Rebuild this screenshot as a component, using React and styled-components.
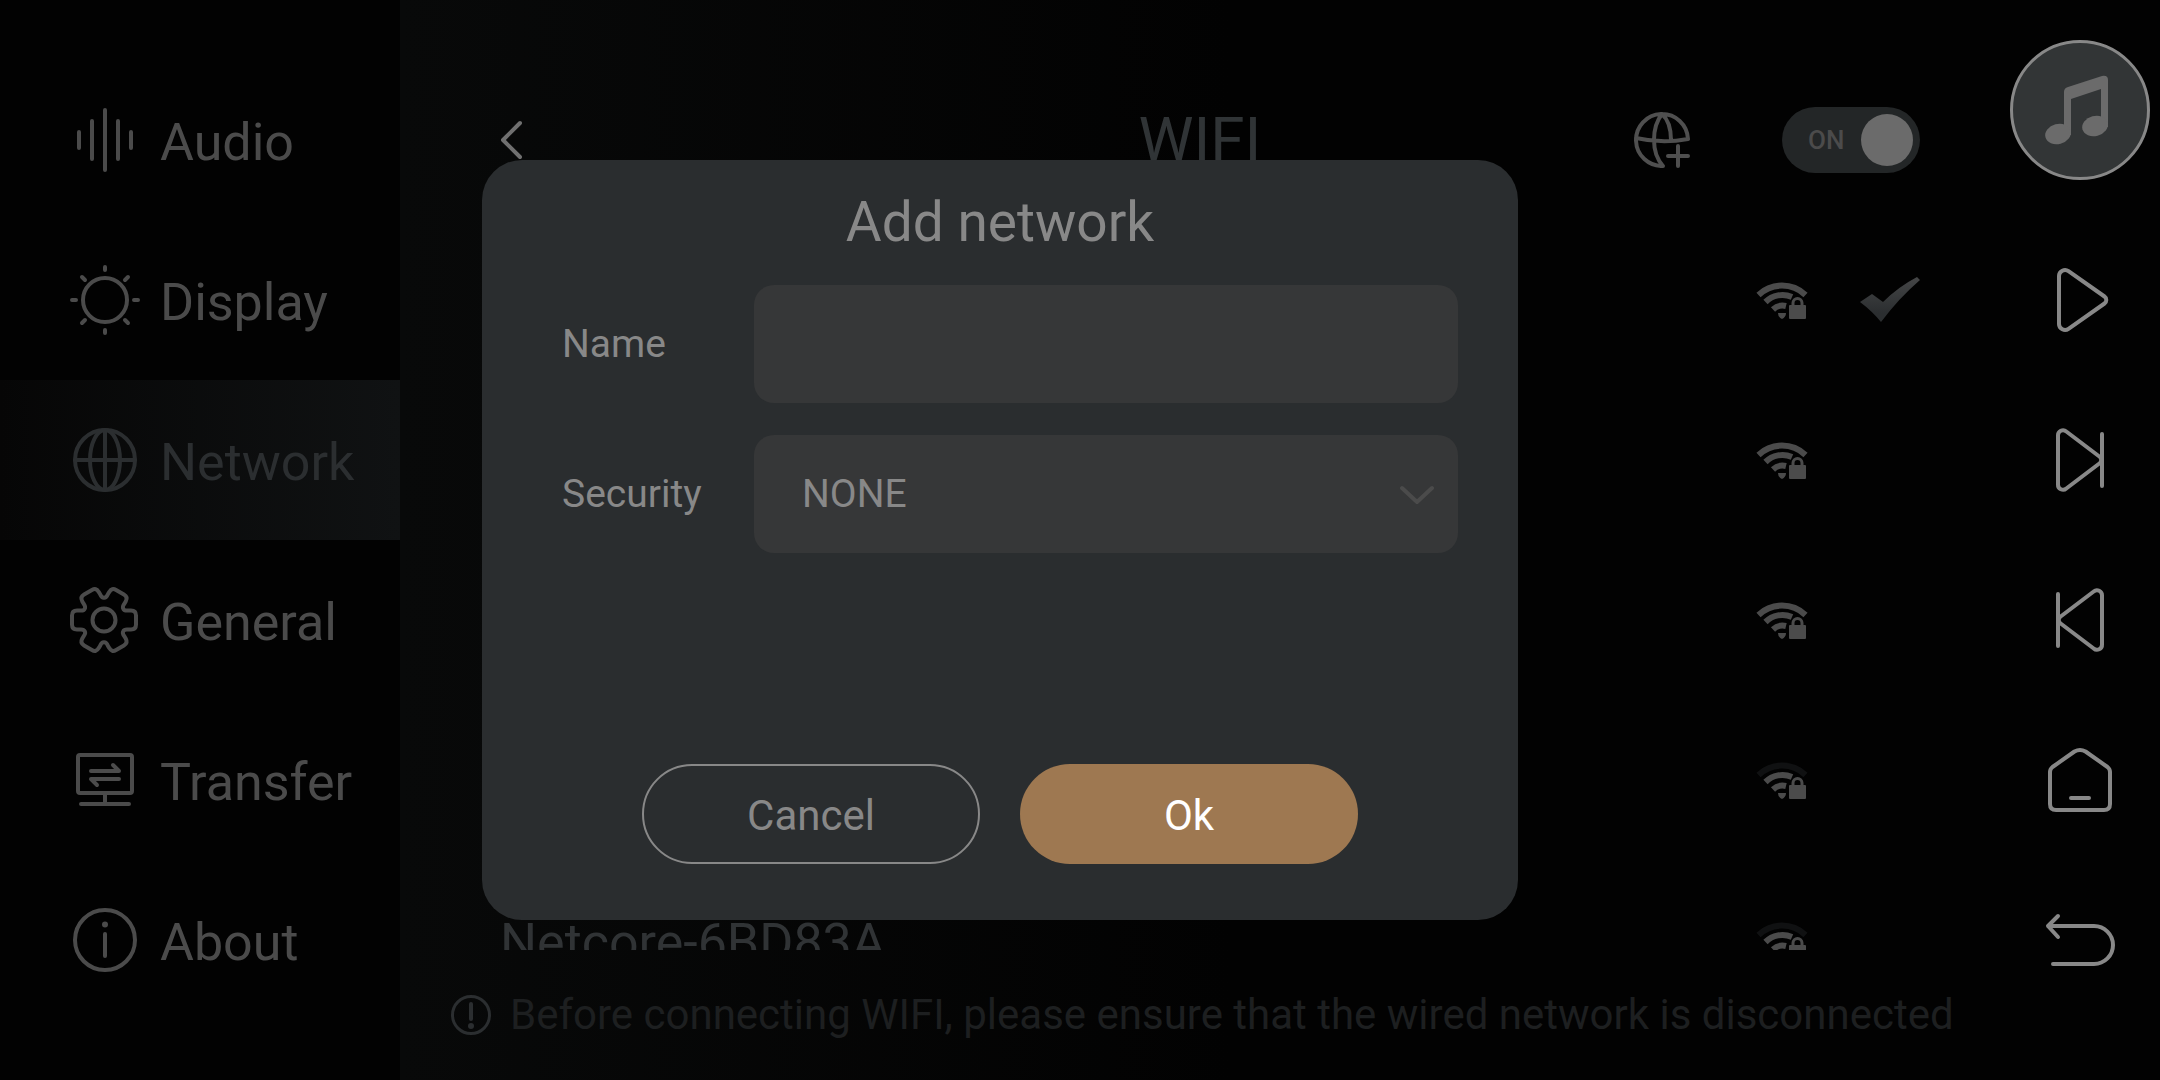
import React, { useState } from "react";
import styled, { createGlobalStyle, css } from "styled-components";

const GlobalStyle = createGlobalStyle`
  *,
  *::before,
  *::after {
    box-sizing: border-box;
  }

  body {
    margin: 0;
    background: #020202;
    font-family: Roboto, "Liberation Sans", sans-serif;
  }

  button,
  input,
  select {
    font-family: inherit;
  }
`;

const Shell = styled.div`
  display: flex;
  height: 100vh;
  overflow: hidden;
`;

const Screen = styled.div`
  position: relative;
  flex: 1;
  display: flex;
  min-width: 0;
`;

const Sidebar = styled.nav`
  flex: 0 0 400px;
  padding-top: 60px;
`;

const MenuItem = styled.button`
  display: flex;
  align-items: center;
  gap: 20px;
  width: 100%;
  height: 160px;
  padding: 0 0 0 70px;
  border: 0;
  background: ${({ $active }) =>
    $active ? "linear-gradient(90deg, #060606, #101213)" : "none"};
  color: ${({ $active }) => ($active ? "#2b2e30" : "#4b4b4b")};
  font-size: 52px;
  line-height: 60px;
  text-align: left;
`;

const MenuLabel = styled.span`
  padding-top: 5px;
`;

const Svg = styled.svg.attrs({ "aria-hidden": true })`
  display: block;
  flex: none;
  fill: none;
  stroke: currentColor;
  stroke-width: ${({ $stroke }) => $stroke || 4};
  stroke-linecap: round;
  stroke-linejoin: round;
`;

const Main = styled.main`
  flex: 1;
  display: flex;
  flex-direction: column;
  min-width: 0;
  padding-top: 60px;
  background: linear-gradient(90deg, #080909, #020202 52%);
`;

const Header = styled.header`
  display: grid;
  grid-template-columns: 1fr auto 1fr;
  align-items: center;
  height: 160px;
  flex: none;
  padding: 0 80px 0 100px;
`;

const PageTitle = styled.h1`
  margin: 0;
  padding-right: 20px;
  color: #303436;
  font-size: 62px;
  font-weight: 400;
  line-height: 70px;
`;

const HeaderActions = styled.div`
  display: flex;
  align-items: center;
  justify-content: flex-end;
  gap: 92px;
`;

const IconButton = styled.button`
  justify-self: start;
  padding: 0;
  border: 0;
  background: none;
  color: ${({ $bright }) => ($bright ? "#707070" : "#4f4f4f")};
`;

const Switch = styled.label`
  display: flex;
  align-items: center;
  justify-content: space-between;
  width: 138px;
  height: 66px;
  padding: 0 7px 0 26px;
  border-radius: 33px;
  background: #232627;
  color: #4b4b4b;
  font-size: 26px;
  font-weight: 500;
`;

const SwitchKnob = styled.input`
  appearance: none;
  width: 52px;
  height: 52px;
  margin: 0;
  border-radius: 50%;
  background: #6b6b6b;
`;

const NetworkList = styled.ul`
  flex: 1;
  min-height: 0;
  margin: 0;
  padding: 0 80px 0 100px;
  overflow: hidden;
  list-style: none;
`;

const NetworkRow = styled.li`
  display: flex;
  align-items: center;
  gap: 52px;
  height: 160px;
  color: #4b4b4b;
`;

const NetworkName = styled.span`
  flex: 1;
  padding-top: 5px;
  color: #303335;
  font-size: 52px;
  line-height: 60px;
`;

const CheckSlot = styled.span`
  width: 60px;
`;

const Notice = styled.p`
  display: flex;
  align-items: center;
  gap: 18px;
  flex: none;
  height: 130px;
  margin: 0;
  padding-left: 50px;
  color: #1d1f20;
  font-size: 42px;
  line-height: 50px;
  white-space: nowrap;

  svg {
    color: #2b2e30;
  }
`;

const Rail = styled.aside`
  flex: 0 0 160px;
  display: flex;
  flex-direction: column;
  align-items: center;
  padding-top: 40px;
`;

const Album = styled.button`
  display: grid;
  place-items: center;
  width: 140px;
  height: 140px;
  margin-bottom: 40px;
  padding: 0;
  border: 3px solid #888;
  border-radius: 50%;
  background: #323536;
  color: #6b6b6b;
`;

const RailButton = styled.button`
  display: grid;
  place-items: center;
  width: 100%;
  height: 160px;
  padding: 0;
  border: 0;
  background: none;
  color: #888;
`;

const Overlay = styled.div`
  position: absolute;
  inset: 0;
  display: grid;
  place-items: center;
`;

const Dialog = styled.form`
  display: flex;
  flex-direction: column;
  width: 1036px;
  min-height: 760px;
  padding: 0 60px 56px 80px;
  border-radius: 40px;
  background: #2a2d2f;
  color: #888;
`;

const DialogTitle = styled.h2`
  margin: 0;
  padding-right: 20px;
  font-size: 55px;
  font-weight: 400;
  line-height: 125px;
  text-align: center;
`;

const Fields = styled.div`
  display: grid;
  grid-template-columns: 192px 1fr;
  align-items: center;
  row-gap: 32px;
  font-size: 39px;
`;

const field = css`
  display: block;
  width: 100%;
  height: 118px;
  padding: 0 48px;
  border: 0;
  border-radius: 20px;
  outline: 0;
  background: #363738;
  color: #888;
  font-size: 39px;
`;

const TextInput = styled.input`
  ${field}
`;

const Select = styled.select`
  ${field}
  appearance: none;
`;

const SelectBox = styled.div`
  position: relative;
  color: #4b4b4b;

  svg {
    position: absolute;
    top: 50px;
    right: 24px;
    pointer-events: none;
  }
`;

const Actions = styled.div`
  display: flex;
  justify-content: center;
  gap: 40px;
  margin-top: auto;
  padding-right: 20px;
`;

const Button = styled.button`
  width: 338px;
  height: 100px;
  padding: 2px 0 0;
  border: ${({ $primary }) => ($primary ? "0" : "2px solid #888")};
  border-radius: 50px;
  background: ${({ $primary }) => ($primary ? "#9e7851" : "none")};
  color: ${({ $primary }) => ($primary ? "#fff" : "#888")};
  font-size: 42px;
`;

// six teeth, one every 60 degrees, with a rounded valley between each pair
const gearPath = () => {
  let d = "";
  for (let i = 0; i < 6; i++) {
    const at = (x, y, turn = i) => {
      const a = (turn * Math.PI) / 3;
      const px = 34 + x * Math.cos(a) - y * Math.sin(a);
      const py = 35 + x * Math.sin(a) + y * Math.cos(a);
      return `${px.toFixed(1)} ${py.toFixed(1)} `;
    };
    if (i === 0) d += `M${at(24.5, -9.5)}`;
    d += `L${at(27, -9.5)}Q${at(32, -9.5)}${at(32, -4.5)}`;
    d += `L${at(32, 4.5)}Q${at(32, 9.5)}${at(27, 9.5)}`;
    d += `L${at(24.5, 9.5)}Q${at(20.3, 9)}${at(19.3, 11.1)}`;
    d += `Q${at(20.3, -9, i + 1)}${at(24.5, -9.5, i + 1)}`;
  }
  return `${d}Z`;
};

const menuIcons = {
  Audio: <path d="M9 27v16M22 16v38M35 5v60M48 16v38M61 27v16" />,
  Display: (
    <>
      <circle cx="35" cy="35" r="22" />
      <path d="M35 2v3M35 65v3M2 35h4M64 35h4M12 12l3 3M55 55l3 3M12 58l3-3M55 15l3-3" />
    </>
  ),
  Network: (
    <>
      <circle cx="35" cy="35" r="30" />
      <ellipse cx="35" cy="35" rx="15" ry="30" />
      <path d="M35 5v60M5 35h60" />
    </>
  ),
  General: (
    <>
      <path d={gearPath()} />
      <circle cx="34" cy="35" r="11.5" />
    </>
  ),
  Transfer: (
    <>
      <rect x="8" y="10" width="54" height="38" rx="2" />
      <path d="M35 48v11M11 59h48M21 26h28l-6-6M49 34H21l6 6" />
    </>
  ),
  About: (
    <>
      <circle cx="35" cy="35" r="30" />
      <path d="M35 29v22" />
      <circle cx="35" cy="19.5" r="3" fill="currentColor" stroke="none" />
    </>
  ),
};

const railIcons = {
  Play: (
    <path d="M19 16a6 6 0 0 1 9.500-4.800L64.500 36.500a4.300 4.300 0 0 1 0 7L28.500 68.800A6 6 0 0 1 19 64Z" />
  ),
  Next: (
    <path d="M62 14v52M18 15.500a5 5 0 0 1 8.300-4L60 37q3 3 0 6L26.300 68.500a5 5 0 0 1-8.300-4Z" />
  ),
  Previous: (
    <path d="M18 14v52M62 15.500a5 5 0 0 0-8.300-4L20 37q-3 3 0 6L53.700 68.500a5 5 0 0 0 8.300-4Z" />
  ),
  Home: (
    <path d="M10 32q0-3 2.500-5L34.500 11.500q5.500-3 11 0L67.500 27q2.500 2 2.500 5v32q0 6-6 6H16q-6 0-6-6ZM31 58h18" />
  ),
  Back: <path d="M18 16L8 26l10 11M8 26h46a19 19 0 0 1 0 38H13" />,
};

const networks = [
  { id: 1, bars: 4, connected: true },
  { id: 2, bars: 4 },
  { id: 3, bars: 4 },
  { id: 4, bars: 3 },
  { id: 5, bars: 3, name: "Netcore-6BD83A" },
];

function WifiLock({ bars }) {
  return (
    <Svg width="52" height="40" viewBox="0 0 52 40" $stroke={6}>
      <g strokeLinecap="butt">
        <path
          d="M2.500 15A34 34 0 0 1 49.500 15"
          stroke={bars > 3 ? "currentColor" : "#101112"}
        />
        <path d="M9.500 22A24 24 0 0 1 36 17" />
        <path d="M17 29.500A14 14 0 0 1 30 26" />
      </g>
      <path
        d="M22 33h8q0 4-4 6q-4-2-4-6Z"
        fill="currentColor"
        stroke="none"
      />
      <rect
        x="33"
        y="25"
        width="17"
        height="14"
        rx="1"
        fill="currentColor"
        stroke="none"
      />
      <path d="M37 26v-3a4.500 4.500 0 0 1 9 0v3" strokeWidth="3" />
    </Svg>
  );
}

function Check() {
  return (
    <Svg width="60" height="46" viewBox="0 0 60 46">
      <defs>
        <linearGradient id="check" x1="0" y1="0" x2="0" y2="1">
          <stop offset="0" stopColor="#454647" />
          <stop offset="0.8" stopColor="#2b2e30" />
        </linearGradient>
      </defs>
      <path
        d="M0 25L12 17L23 25Q38 10 57 0L60 3Q39 21 21 45Q12 34 0 25Z"
        fill="url(#check)"
        stroke="none"
      />
    </Svg>
  );
}

function AddNetworkDialog() {
  const [name, setName] = useState("");

  return (
    <Overlay>
      <Dialog
        role="dialog"
        aria-labelledby="dialog-title"
        onSubmit={(e) => e.preventDefault()}
      >
        <DialogTitle id="dialog-title">Add network</DialogTitle>
        <Fields>
          <label htmlFor="name">Name</label>
          <TextInput
            id="name"
            type="text"
            value={name}
            onChange={(e) => setName(e.target.value)}
          />
          <label htmlFor="security">Security</label>
          <SelectBox>
            <Select id="security" defaultValue="NONE">
              <option>NONE</option>
            </Select>
            <Svg width="34" height="20" viewBox="0 0 34 20">
              <path d="M2 3l15 14L32 3" />
            </Svg>
          </SelectBox>
        </Fields>
        <Actions>
          <Button type="button">Cancel</Button>
          <Button type="submit" $primary>
            Ok
          </Button>
        </Actions>
      </Dialog>
    </Overlay>
  );
}

export default function App() {
  const [enabled, setEnabled] = useState(true);

  return (
    <>
      <GlobalStyle />
      <Shell>
        <Screen>
          <Sidebar>
            {Object.keys(menuIcons).map((label) => (
              <MenuItem key={label} type="button" $active={label === "Network"}>
                <Svg width="70" height="70" viewBox="0 0 70 70">
                  {menuIcons[label]}
                </Svg>
                <MenuLabel>{label}</MenuLabel>
              </MenuItem>
            ))}
          </Sidebar>
          <Main>
            <Header>
              <IconButton type="button" aria-label="Go back" $bright>
                <Svg width="22" height="40" viewBox="0 0 22 40">
                  <path d="M20 3L3 20l17 17" />
                </Svg>
              </IconButton>
              <PageTitle>WIFI</PageTitle>
              <HeaderActions>
                <IconButton type="button" aria-label="Add network">
                  <Svg width="56" height="56" viewBox="0 0 56 56">
                    <path d="M54 27A26 26 0 1 0 29 54Q20 44 20 28T28 2Q37 10 37 28M2 26Q28 32 54 27M34 44h20M44 34v20" />
                  </Svg>
                </IconButton>
                <Switch>
                  {enabled ? "ON" : "OFF"}
                  <SwitchKnob
                    type="checkbox"
                    role="switch"
                    checked={enabled}
                    onChange={() => setEnabled(!enabled)}
                  />
                </Switch>
              </HeaderActions>
            </Header>
            <NetworkList>
              {networks.map(({ id, name, bars, connected }) => (
                <NetworkRow key={id}>
                  <NetworkName>{name}</NetworkName>
                  <WifiLock bars={bars} />
                  <CheckSlot>{connected && <Check />}</CheckSlot>
                </NetworkRow>
              ))}
            </NetworkList>
            <Notice>
              <Svg width="42" height="42" viewBox="0 0 42 42" $stroke={3}>
                <circle cx="21" cy="21" r="18.500" />
                <path d="M21 10v15" strokeWidth="4" />
                <circle
                  cx="21"
                  cy="32"
                  r="3"
                  fill="currentColor"
                  stroke="none"
                />
              </Svg>
              Before connecting WIFI, please ensure that the wired network is
              disconnected
            </Notice>
          </Main>
          <AddNetworkDialog />
        </Screen>
        <Rail>
          <Album type="button" aria-label="Now playing">
            <Svg width="134" height="134" viewBox="3 3 134 134">
              <g fill="currentColor" stroke="none">
                <path d="M54 52q0-4 4-5L92 36q6-1 6 4v47h-7V49L61 59v36h-7Z" />
                <ellipse
                  cx="48"
                  cy="94"
                  rx="13"
                  ry="10"
                  transform="rotate(-15 48 94)"
                />
                <ellipse
                  cx="85"
                  cy="86"
                  rx="13"
                  ry="10"
                  transform="rotate(-15 85 86)"
                />
              </g>
            </Svg>
          </Album>
          {Object.keys(railIcons).map((label) => (
            <RailButton key={label} type="button" aria-label={label}>
              <Svg width="80" height="80" viewBox="0 0 80 80">
                {railIcons[label]}
              </Svg>
            </RailButton>
          ))}
        </Rail>
      </Shell>
    </>
  );
}
